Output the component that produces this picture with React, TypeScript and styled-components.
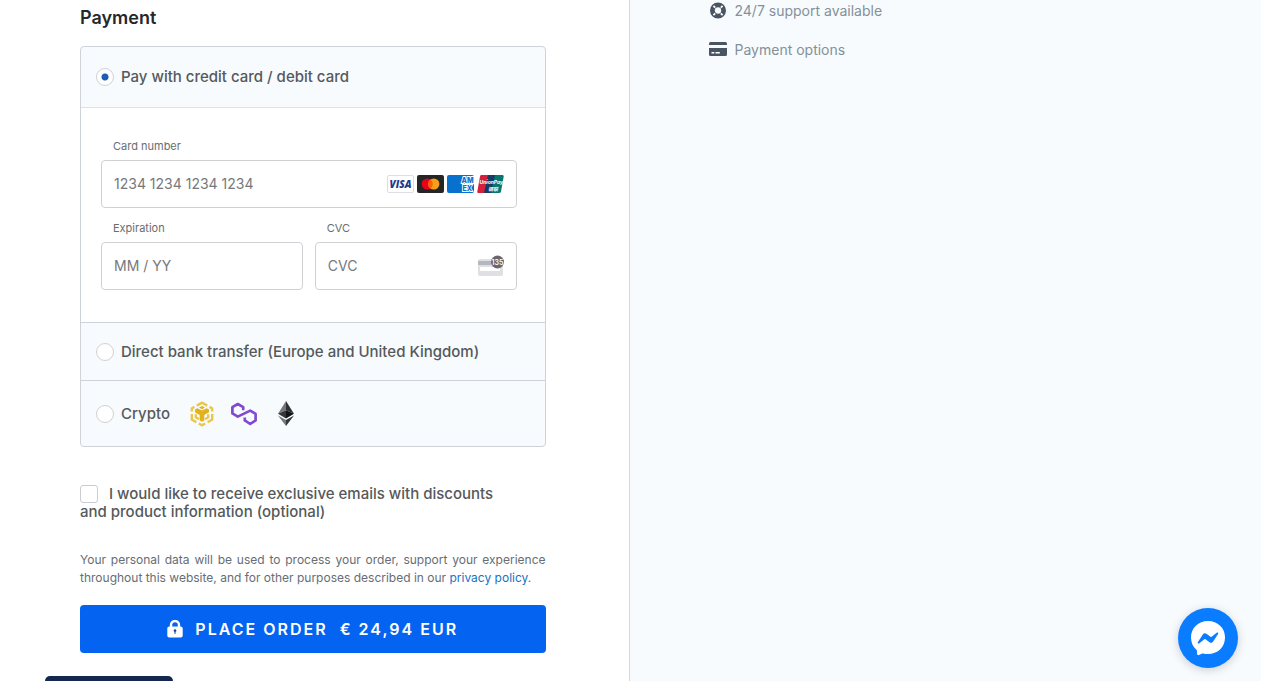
import React from "react";
import styled, { createGlobalStyle } from "styled-components";

const GlobalStyle = createGlobalStyle`
  *, *::before, *::after { box-sizing: border-box; }
  body {
    margin: 0;
    background: #ffffff;
    font-family: Inter, "Liberation Sans", sans-serif;
    color: #55595c;
  }
`;

const Page = styled.div`
  display: grid;
  grid-template-columns: 1fr 1fr;
  min-height: 100vh;
`;

const Main = styled.main`
  padding: 6px 85px 24px 80px;
`;

const Aside = styled.aside`
  margin-left: -2px;
  padding: 0 79px;
  border-left: 1px solid #d3d6da;
  background: #f7fbfd;
`;

const Heading = styled.h2`
  margin: 0 0 16px;
  font-size: 18px;
  line-height: 24px;
  font-weight: 600;
  color: #24282b;
`;

const Methods = styled.div`
  border: 1px solid #cdd3d9;
  border-radius: 4px;
  background: #f7fbfd;
  overflow: hidden;
`;

const MethodRow = styled.label<{ $height: number; $divided?: boolean }>`
  display: flex;
  align-items: center;
  height: ${(p) => p.$height}px;
  padding: 0 15px;
  border-top: ${(p) => (p.$divided ? "1px solid #cdd3d9" : "0")};
  font-size: 15px;
  line-height: 18px;
  font-weight: 500;
`;

const Radio = styled.input`
  appearance: none;
  flex: none;
  width: 18px;
  height: 18px;
  margin: 0 7px 0 0;
  border: 1px solid #cfd2d6;
  border-radius: 50%;
  background: #ffffff;
  &:checked {
    background: radial-gradient(circle, #1d5cb8 0 3px, #ffffff 4px);
  }
`;

const Coins = styled.span`
  display: flex;
  align-items: center;
  gap: 14px;
  margin-left: 18px;
`;

const CardForm = styled.div`
  display: grid;
  grid-template-columns: 1fr 1fr;
  gap: 12px;
  padding: 30px 28px 32px 20px;
  border-top: 1px solid #e0e3e6;
  background: #ffffff;
`;

const Field = styled.div<{ $wide?: boolean }>`
  grid-column: ${(p) => (p.$wide ? "1 / -1" : "auto")};
  display: flex;
  flex-direction: column;
  gap: 6px;
  min-width: 0;
`;

const FieldLabel = styled.label`
  padding-left: 12px;
  font-size: 11px;
  line-height: 16px;
  color: #6a6d70;
`;

const InputBox = styled.div`
  display: flex;
  align-items: center;
  height: 48px;
  padding: 0 12px;
  border: 1px solid #cfd1d4;
  border-radius: 4px;
`;

const TextInput = styled.input`
  flex: 1;
  min-width: 0;
  padding: 0;
  border: 0;
  outline: 0;
  background: transparent;
  font: 400 14px/20px Inter, "Liberation Sans", sans-serif;
  color: #333333;
  &::placeholder { color: #76797c; opacity: 1; }
`;

const Brands = styled.span`
  display: flex;
  gap: 3px;
`;

const OptIn = styled.label`
  display: block;
  margin-top: 38px;
  padding-right: 32px;
  font-size: 15px;
  line-height: 18px;
  font-weight: 500;
`;

const Checkbox = styled.input`
  appearance: none;
  width: 18px;
  height: 18px;
  margin: 0 11px 0 0;
  border: 1px solid #c9ccd0;
  border-radius: 3px;
  background: #ffffff;
  vertical-align: -4px;
`;

const Terms = styled.p`
  margin: 30px 0 18px;
  font-size: 12px;
  line-height: 18px;
  text-align: justify;
  color: #666d75;
`;

const Link = styled.a`
  color: #1672c4;
  text-decoration: none;
`;

const OrderButton = styled.button`
  display: flex;
  align-items: center;
  justify-content: center;
  gap: 12px;
  width: 100%;
  height: 48px;
  padding: 0;
  border: 0;
  border-radius: 4px;
  background: #0563f1;
  color: #ffffff;
  font: 600 16px/24px Inter, "Liberation Sans", sans-serif;
  letter-spacing: 2px;
  white-space: pre;
`;

const Perks = styled.ul`
  margin: 0;
  padding: 1px 0 0;
  list-style: none;
`;

const Perk = styled.li`
  display: flex;
  align-items: center;
  gap: 8px;
  height: 20px;
  margin-bottom: 19px;
  font-size: 14px;
  line-height: 20px;
  color: #84919a;
`;

const BottomTab = styled.div`
  position: fixed;
  left: 45px;
  bottom: 0;
  width: 128px;
  height: 5px;
  border-radius: 6px 6px 0 0;
  background: #13274f;
`;

const ChatButton = styled.button`
  position: fixed;
  right: 23px;
  bottom: 13px;
  display: grid;
  place-items: center;
  width: 60px;
  height: 60px;
  padding: 0;
  border: 0;
  border-radius: 50%;
  background: #0a7cff;
  box-shadow: 0 2px 10px rgba(0, 0, 0, 0.18);
`;

const Visa = () => (
  <svg width="27" height="18" viewBox="0 0 27 18" role="img" aria-label="Visa">
    <rect x=".5" y=".5" width="26" height="17" rx="1.5" fill="#fff" stroke="#dcdee3" />
    <text x="13.5" y="12.6" textAnchor="middle" fontFamily="Open Sans, sans-serif" fontSize="10" fontWeight="800" fontStyle="italic" fill="#26388f">VISA</text>
  </svg>
);

const Mastercard = () => (
  <svg width="27" height="18" viewBox="0 0 27 18" role="img" aria-label="Mastercard">
    <rect width="27" height="18" rx="2" fill="#252525" />
    <circle cx="10.2" cy="9" r="5.6" fill="#eb001b" />
    <circle cx="16.8" cy="9" r="5.6" fill="#f79e1b" />
    <path d="M13.5 4.5a5.6 5.6 0 0 1 0 9 5.6 5.6 0 0 1 0-9z" fill="#ff5f00" />
  </svg>
);

const Amex = () => (
  <svg width="27" height="18" viewBox="0 0 27 18" role="img" aria-label="American Express">
    <rect width="27" height="18" rx="2" fill="#0870cd" />
    <g fontFamily="Inter, sans-serif" fontSize="7" fontWeight="800" fill="#0870cd" stroke="#fff" strokeWidth="1.8" paintOrder="stroke">
      <text x="14.500" y="8">AM</text>
      <text x="15.500" y="16">EX</text>
    </g>
  </svg>
);

const UnionPay = () => (
  <svg width="27" height="18" viewBox="0 0 27 18" role="img" aria-label="UnionPay">
    <path d="M4 0h8L8 18H1.500Q0 18 .3 16.500L3 1.500Q3.200 0 4 0z" fill="#d3213c" />
    <path d="M11 0h8l-4 18H7z" fill="#143a66" />
    <path d="M18 0h7.500Q27 0 26.700 1.500L24 16.500Q23.700 18 22 18h-8z" fill="#08756f" />
    <g fontWeight="700" fontStyle="italic" fill="#fff">
      <text x="2.500" y="8.500" fontSize="5" fontFamily="Inter, sans-serif">UnionPay</text>
      <text x="11" y="15.500" fontSize="5" fontFamily="Noto Sans CJK SC, sans-serif">银联</text>
    </g>
  </svg>
);

const CvcCard = () => (
  <svg width="27" height="22" viewBox="0 0 27 22" aria-hidden="true">
    <rect x="1" y="4" width="25" height="17" rx="2" fill="#dfe0e4" />
    <path d="M1 6h25v4H1z" fill="#b6b7bc" />
    <path d="M3 12h20v4H3z" fill="#fff" />
    <circle cx="20.500" cy="7" r="6.500" fill="#67686d" />
    <text x="20.500" y="9.600" textAnchor="middle" fontFamily="Inter, sans-serif" fontSize="7" fontWeight="600" fill="#fff">135</text>
  </svg>
);

const BnbCoin = () => (
  <svg width="28" height="26" viewBox="-2 0 28 26" aria-hidden="true">
    <g fill="none" stroke="#e8c74a" strokeWidth="2.400">
      <path d="M6.800 4.600 12 1.600l5.200 3" />
      <path d="M1.800 10.500V7.400l2.600-1.500M19.600 5.900l2.600 1.500v3.100" />
      <path d="M1.800 13v5.600l4.600 2.700M22.200 13v5.600l-4.600 2.700" />
      <path d="m8.800 22.500 3.200 1.900 3.200-1.900" />
      <path d="M5.800 13.200v3.200l3.200 1.900M18.200 13.200v3.200L15 18.300" />
    </g>
    <path d="m5 8.600 2.300-1.400L12 9.500l4.700-2.300L19 8.600v2.700L14.300 14v5.400L12 20.800l-2.300-1.400V14L5 11.300z" fill="#e4b01c" />
    <path d="m12 5 3 1.600L12 8.200 9 6.600z" fill="#e4b01c" />
  </svg>
);

const PolygonCoin = () => (
  <svg width="28" height="24" viewBox="0 0 28 24" aria-hidden="true">
    <path d="M13.200 8.200V5.200L7.800 2 2.400 5.200v6.200l5.400 3.200 12.400-6 5.400 3.200v6.600L20.200 22l-5.400-3.600v-3" fill="none" stroke="#804bd0" strokeWidth="2.700" strokeLinejoin="round" />
  </svg>
);

const EthCoin = () => (
  <svg width="28" height="25" viewBox="-6 0 28 25" aria-hidden="true">
    <path d="M8 0v9.200L0 12.800z" fill="#777777" />
    <path d="m8 0 8 12.800-8-3.600z" fill="#303136" />
    <path d="M8 9.200v8.300l-8-4.700z" fill="#343539" />
    <path d="m8 9.200 8 3.600-8 4.700z" fill="#111216" />
    <path d="M0 14.500 8 19v6z" fill="#77787b" />
    <path d="M16 14.500 8 19v6z" fill="#34353a" />
  </svg>
);

const LockIcon = () => (
  <svg width="16" height="18" viewBox="0 0 16 18" aria-hidden="true">
    <path d="M4 8V5a4 4 0 0 1 8 0v3" fill="none" stroke="#fff" strokeWidth="2.400" />
    <rect x=".3" y="6.500" width="15.400" height="11" rx="2" fill="#fff" />
    <path d="M6.600 10.500a1.400 1.400 0 1 1 2 1.300L8.400 14h-.8l-.2-2.200a1.400 1.400 0 0 1-.8-1.300z" fill="#1a3f9c" />
  </svg>
);

const SupportIcon = () => (
  <svg width="18" height="18" viewBox="0 1 18 18" aria-hidden="true">
    <circle cx="9" cy="9.500" r="5.600" fill="none" stroke="#4a5563" strokeWidth="4.800" />
    <path d="m4.400 4.900 1.800 1.800M13.600 4.900l-1.800 1.800M4.400 14.100l1.800-1.800M13.600 14.100l-1.800-1.800" stroke="#f7fbfd" strokeWidth="1.800" />
  </svg>
);

const PaymentIcon = () => (
  <svg width="18" height="16" viewBox="0 0 18 16" aria-hidden="true">
    <path d="M1.500 0h15Q18 0 18 1.500V3H0V1.500Q0 0 1.500 0z" fill="#4a5563" />
    <path d="M0 6h18v6.500q0 1.500-1.500 1.500h-15Q0 14 0 12.500z" fill="#4a5563" />
    <path d="M2.500 10h2.800v1.500H2.500zM6.500 10h4.300v1.500H6.500z" fill="#fff" />
  </svg>
);

const MessengerIcon = () => (
  <svg width="36" height="36" viewBox="0 0 36 36" aria-hidden="true">
    <path d="M18 1C8.400 1 1 8 1 17.500c0 5 2 9.300 5.400 12.200.3.300.5.700.5 1.100l.1 3c0 1 1 1.600 1.900 1.200l3.400-1.500c.3-.1.600-.1.900 0 1.500.4 3.200.6 4.800.6 9.600 0 17-7 17-16.600S27.600 1 18 1z" fill="#fff" />
    <path d="m7.800 22.300 5-7.900c.8-1.300 2.500-1.600 3.700-.7l4 3c.3.300.8.300 1.100 0l5.400-4.100c.7-.5 1.600.3 1.200 1.100l-5 7.900c-.8 1.300-2.500 1.600-3.700.7l-4-3c-.3-.3-.8-.3-1.100 0L9 23.400c-.7.600-1.600-.3-1.200-1.100z" fill="#0a7cff" />
  </svg>
);

export default function App() {
  return (
    <>
      <GlobalStyle />
      <Page>
        <Main>
          <Heading>Payment</Heading>
          <Methods>
            <MethodRow $height={60}>
              <Radio type="radio" name="method" defaultChecked />
              Pay with credit card / debit card
            </MethodRow>
            <CardForm>
              <Field $wide>
                <FieldLabel htmlFor="number">Card number</FieldLabel>
                <InputBox>
                  <TextInput id="number" placeholder="1234 1234 1234 1234" />
                  <Brands>
                    <Visa />
                    <Mastercard />
                    <Amex />
                    <UnionPay />
                  </Brands>
                </InputBox>
              </Field>
              <Field>
                <FieldLabel htmlFor="expiry">Expiration</FieldLabel>
                <InputBox>
                  <TextInput id="expiry" placeholder="MM / YY" />
                </InputBox>
              </Field>
              <Field>
                <FieldLabel htmlFor="cvc">CVC</FieldLabel>
                <InputBox>
                  <TextInput id="cvc" placeholder="CVC" />
                  <CvcCard />
                </InputBox>
              </Field>
            </CardForm>
            <MethodRow $height={58} $divided>
              <Radio type="radio" name="method" />
              Direct bank transfer (Europe and United Kingdom)
            </MethodRow>
            <MethodRow $height={66} $divided>
              <Radio type="radio" name="method" />
              Crypto
              <Coins>
                <BnbCoin />
                <PolygonCoin />
                <EthCoin />
              </Coins>
            </MethodRow>
          </Methods>
          <OptIn>
            <Checkbox type="checkbox" />
            I would like to receive exclusive emails with discounts and product information (optional)
          </OptIn>
          <Terms>
            Your personal data will be used to process your order, support your experience
            throughout this website, and for other purposes described in our{" "}
            <Link href="#privacy">privacy policy</Link>.
          </Terms>
          <OrderButton type="button">
            <LockIcon />
            {"PLACE ORDER  € 24,94 EUR"}
          </OrderButton>
        </Main>
        <Aside>
          <Perks>
            <Perk>
              <SupportIcon />
              24/7 support available
            </Perk>
            <Perk>
              <PaymentIcon />
              Payment options
            </Perk>
          </Perks>
        </Aside>
      </Page>
      <BottomTab />
      <ChatButton type="button" aria-label="Open Messenger chat">
        <MessengerIcon />
      </ChatButton>
    </>
  );
}
